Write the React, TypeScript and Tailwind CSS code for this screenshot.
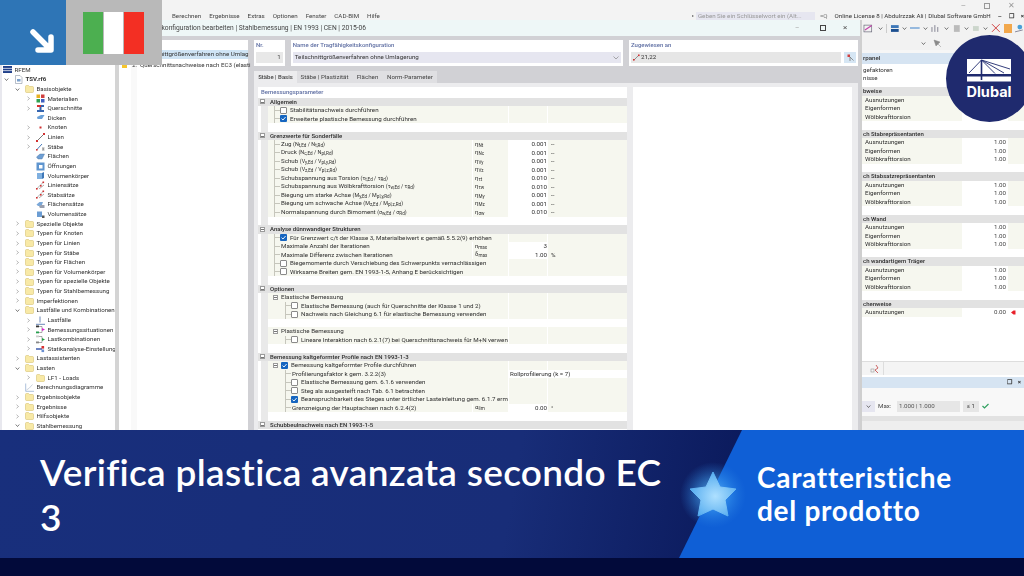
import React from 'react';

type RowT =
  | { k: 'h'; l: string }
  | { k: 's'; l: string; check?: boolean }
  | { k: 'c'; l: string; lv: 0 | 1; on?: boolean }
  | { k: 'v'; l: React.ReactNode; lv?: 0 | 1; s?: React.ReactNode; v?: string; u?: string; wide?: string }
  | { k: 'b' };

const Sub = ({ c }: { c: string }) => <span className="text-[4.6px] relative top-[1px]">{c}</span>;
const Ratio = ({ t, a, b, c, d }: { t: string; a: string; b: string; c: string; d: string }) => (
  <>
    {t} <span className="text-[5.4px]">({a}<Sub c={b} /> / {c}<Sub c={d} />)</span>
  </>
);
const Eta = ({ c }: { c: string }) => <>η<Sub c={c} /></>;

const rows: RowT[] = [
  { k: 'h', l: 'Allgemein' },
  { k: 'c', lv: 0, l: 'Stabilitätsnachweis durchführen' },
  { k: 'c', lv: 0, on: true, l: 'Erweiterte plastische Bemessung durchführen' },
  { k: 'b' },
  { k: 'h', l: 'Grenzwerte für Sonderfälle' },
  { k: 'v', l: <Ratio t="Zug" a="N" b="t,Ed" c="N" d="t,Rd" />, s: <Eta c="Nt" />, v: '0.001', u: '--' },
  { k: 'v', l: <Ratio t="Druck" a="N" b="c,Ed" c="N" d="pl,Rd" />, s: <Eta c="Nc" />, v: '0.001', u: '--' },
  { k: 'v', l: <Ratio t="Schub" a="V" b="y,Ed" c="V" d="pl,y,Rd" />, s: <Eta c="Vy" />, v: '0.001', u: '--' },
  { k: 'v', l: <Ratio t="Schub" a="V" b="z,Ed" c="V" d="pl,z,Rd" />, s: <Eta c="Vz" />, v: '0.001', u: '--' },
  { k: 'v', l: <Ratio t="Schubspannung aus Torsion" a="τ" b="t,Ed" c="τ" d="Rd" />, s: <Eta c="τt" />, v: '0.010', u: '--' },
  { k: 'v', l: <Ratio t="Schubspannung aus Wölbkrafttorsion" a="τ" b="w,Ed" c="τ" d="Rd" />, s: <Eta c="τw" />, v: '0.010', u: '--' },
  { k: 'v', l: <Ratio t="Biegung um starke Achse" a="M" b="y,Ed" c="M" d="pl,y,Rd" />, s: <Eta c="My" />, v: '0.001', u: '--' },
  { k: 'v', l: <Ratio t="Biegung um schwache Achse" a="M" b="z,Ed" c="M" d="pl,z,Rd" />, s: <Eta c="Mz" />, v: '0.001', u: '--' },
  { k: 'v', l: <Ratio t="Normalspannung durch Bimoment" a="σ" b="w,Ed" c="σ" d="Rd" />, s: <Eta c="σw" />, v: '0.010', u: '--' },
  { k: 'b' },
  { k: 'h', l: 'Analyse dünnwandiger Strukturen' },
  { k: 'c', lv: 0, on: true, l: 'Für Grenzwert c/t der Klasse 3, Materialbeiwert ε gemäß 5.5.2(9) erhöhen' },
  { k: 'v', l: 'Maximale Anzahl der Iterationen', s: <>n<Sub c="max" /></>, v: '3' },
  { k: 'v', l: 'Maximale Differenz zwischen Iterationen', s: <>δ<Sub c="max" /></>, v: '1.00', u: '%' },
  { k: 'c', lv: 0, l: 'Biegemomente durch Verschiebung des Schwerpunkts vernachlässigen' },
  { k: 'c', lv: 0, l: 'Wirksame Breiten gem. EN 1993-1-5, Anhang E berücksichtigen' },
  { k: 'b' },
  { k: 'h', l: 'Optionen' },
  { k: 's', l: 'Elastische Bemessung' },
  { k: 'c', lv: 1, l: 'Elastische Bemessung (auch für Querschnitte der Klasse 1 und 2)' },
  { k: 'c', lv: 1, l: 'Nachweis nach Gleichung 6.1 für elastische Bemessung verwenden' },
  { k: 'b' },
  { k: 's', l: 'Plastische Bemessung' },
  { k: 'c', lv: 1, l: 'Lineare Interaktion nach 6.2.1(7) bei Querschnittsnachweis für M+N verwen' },
  { k: 'b' },
  { k: 'h', l: 'Bemessung kaltgeformter Profile nach EN 1993-1-3' },
  { k: 's', check: true, l: 'Bemessung kaltgeformter Profile durchführen' },
  { k: 'v', lv: 1, l: 'Profilierungsfaktor k gem. 3.2.2(3)', wide: 'Rollprofilierung (k = 7)' },
  { k: 'c', lv: 1, l: 'Elastische Bemessung gem. 6.1.6 verwenden' },
  { k: 'c', lv: 1, l: 'Steg als ausgesteift nach Tab. 6.1 betrachten' },
  { k: 'c', lv: 1, on: true, l: 'Beanspruchbarkeit des Steges unter örtlicher Lasteinleitung gem. 6.1.7 ermi' },
  { k: 'v', lv: 1, l: 'Grenzneigung der Hauptachsen nach 6.2.4(2)', s: <>α<Sub c="lim" /></>, v: '0.00', u: '°' },
  { k: 'b' },
  { k: 'h', l: 'Schubbeulnachweis nach EN 1993-1-5' },
];

const Box = ({ on }: { on?: boolean }) =>
  on ? (
    <svg width="7" height="7" viewBox="0 0 7 7" className="shrink-0">
      <rect width="7" height="7" rx="1" fill="#1565c0" />
      <path d="M1.5 3.6 L3 5 L5.6 2" fill="none" stroke="#fff" strokeWidth="0.9" />
    </svg>
  ) : (
    <span className="block w-[7px] h-[7px] shrink-0 bg-white border border-[#8a8a8a] rounded-[1px]" />
  );

const Minus = () => (
  <span className="flex items-center justify-center w-[5px] h-[5px] shrink-0 border border-[#9a9a9a] bg-white">
    <span className="block w-[3px] h-[0.5px] bg-[#777]" />
  </span>
);

const Line = ({ ml }: { ml: string }) => (
  <span className={`flex items-center h-full w-[6px] shrink-0 border-l border-[#c6c6bc] ${ml}`}>
    <span className="block w-full h-px bg-[#c6c6bc]" />
  </span>
);

function ParamRow({ r }: { r: RowT }) {
  if (r.k === 'h')
    return (
      <div className="flex items-center h-[8.5px] bg-[#e2e2e2] pl-[2px] gap-[5px] text-[#2c2c2c] text-[6px] font-medium whitespace-nowrap">
        <Minus />
        {r.l}
      </div>
    );
  if (r.k === 'b')
    return (
      <div className="flex h-[8.5px]">
        <div className="w-[10px] bg-[#e9e9e9] border-l-[3px] border-white" />
        <div className="flex-1 bg-white" />
      </div>
    );
  const label =
    r.k === 's' ? (
      <>
        <span className="ml-[5px]">
          <Minus />
        </span>
        {r.check && <span className="ml-[3px]"><Box on /></span>}
        <span className="ml-[3px]">{r.l}</span>
      </>
    ) : r.k === 'c' ? (
      <>
        <Line ml={r.lv ? 'ml-[17px]' : 'ml-[6px]'} />
        <Box on={r.on} />
        <span className="ml-[3px]">{r.l}</span>
      </>
    ) : (
      <>
        <Line ml={r.lv ? 'ml-[17px]' : 'ml-[6px]'} />
        <span className="ml-[1px]">{r.l}</span>
      </>
    );
  const isV = r.k === 'v';
  const wide = isV ? r.wide : undefined;
  const hasSym = isV && !wide;
  return (
    <div className="flex h-[8.5px] text-[#2e2e2e] whitespace-nowrap bg-[#f6f7ef]">
      <div className="w-[10px] bg-[#e9e9e9] border-l-[3px] border-white shrink-0" />
      <div className={`flex items-center overflow-hidden shrink-0 ${hasSym ? 'w-[204px]' : 'w-[240px]'}`}>
        {label}
      </div>
      {hasSym && (
        <>
          <div className="w-[36px] shrink-0 flex items-center pl-[2px] border-l border-white text-[6px]"><span>{isV && r.s}</span></div>
          <div className="w-[40px] shrink-0 flex items-center justify-end pr-[1px] bg-white">{isV && r.v}</div>
        </>
      )}
      {wide ? (
        <div className="flex-1 flex items-center pl-[2px] bg-white">{wide}</div>
      ) : (
        <>
          {!hasSym && <div className="w-[40px] shrink-0 border-x border-white" />}
          <div className="flex-1 flex items-center pl-[3px]">{isV && r.u}</div>
        </>
      )}
    </div>
  );
}

const Folder = () => (
  <svg width="9" height="8" viewBox="0 0 9 8" className="shrink-0">
    <path d="M0.5 1.5 Q0.5 0.5 1.5 0.5 H3.5 L4.5 1.5 H7.5 Q8.5 1.5 8.5 2.5 V6.5 Q8.5 7.5 7.5 7.5 H1.5 Q0.5 7.5 0.5 6.5Z" fill="#f8e9a6" stroke="#d8c272" strokeWidth="0.6" />
  </svg>
);

function TIcon({ k }: { k: string }) {
  const p = { width: 9, height: 9, viewBox: '0 0 9 9', className: 'shrink-0' } as const;
  switch (k) {
    case 'mat':
      return <svg {...p}><rect x="0.5" y="0.5" width="3.5" height="3.5" fill="#e8b020" /><rect x="5" y="0.5" width="3.5" height="3.5" fill="#d04040" /><rect x="0.5" y="5" width="3.5" height="3.5" fill="#30a050" /><rect x="5" y="5" width="3.5" height="3.5" fill="#4060c0" /></svg>;
    case 'qs':
      return <svg {...p}><path d="M1 1H8V3H5.5V6H8V8H1V6H3.5V3H1Z" fill="#3565b0" /><path d="M1 1H5V3H1Z" fill="#d83030" /></svg>;
    case 'thick':
      return <svg {...p}><path d="M1 4L5 2H8.5L6 6H1.5Z" fill="#6aa0d8" /></svg>;
    case 'node':
      return <svg {...p}><rect x="3.5" y="3.5" width="2" height="2" fill="#d03030" /></svg>;
    case 'line':
      return <svg {...p}><path d="M1 8L8 1" stroke="#555" strokeWidth="0.8" /><rect x="0" y="7" width="2" height="2" fill="#d03030" /><rect x="7" y="0" width="2" height="2" fill="#d03030" /></svg>;
    case 'bar':
      return <svg {...p}><path d="M0.5 8L6 2" stroke="#4a7ab8" strokeWidth="1" /><rect x="0" y="7" width="1.6" height="1.6" fill="#d03030" /><path d="M6 6H8.5M6 8H8.5M7.2 6V8" stroke="#555" strokeWidth="0.6" /></svg>;
    case 'surf':
      return <svg {...p}><path d="M0.5 5L4 2H8.5L6 7H2Z" fill="#6e9fd4" stroke="#47709f" strokeWidth="0.4" /></svg>;
    case 'open':
      return <svg {...p}><rect x="0.5" y="0.5" width="8" height="8" fill="#5f95cf" /><rect x="3" y="3" width="3.5" height="3.5" fill="#fff" /></svg>;
    case 'solid':
      return <svg {...p}><path d="M1 2H6V8H1Z" fill="#7fb0e0" /><path d="M6 2L8 1V7L6 8Z" fill="#3f78b8" /></svg>;
    case 'lset':
      return <svg {...p}><path d="M0.5 8L7.5 1M3 8L8 4" stroke="#777" strokeWidth="0.6" /><rect x="0" y="7" width="1.6" height="1.6" fill="#d03030" /><rect x="6.5" y="0.5" width="1.6" height="1.6" fill="#d03030" /><rect x="4" y="4" width="1.6" height="1.6" fill="#d03030" /></svg>;
    case 'sset':
      return <svg {...p}><path d="M0.5 4.5L3.5 2H7L5.5 6H2Z" fill="#7ba8d8" /><path d="M3 6.5L5 5H8.5V8H4Z" fill="#9a9fae" /></svg>;
    case 'vset':
      return <svg {...p}><rect x="1" y="1.5" width="5" height="5.5" fill="#6c9dd3" /><rect x="6" y="5.5" width="2.5" height="2.5" fill="#555" /></svg>;
    case 'lf':
      return <svg {...p}><path d="M4 0.5V6.5M0 8.3H9" stroke="#5b7bb0" strokeWidth="0.9" /></svg>;
    case 'bs':
      return <svg {...p}><path d="M1 1.5H6M1 7.5H6M6 1.5V7.5" stroke="#777" strokeWidth="0.6" /><rect x="0" y="0.5" width="3" height="1.8" fill="#333" /><rect x="0" y="6.5" width="3" height="1.8" fill="#28a050" /><path d="M6 3L9 4.5L6 6Z" fill="#e020d0" /></svg>;
    case 'lk':
      return <svg {...p}><path d="M1 1.5H6M1 7.5H6M6 1.5V7.5" stroke="#777" strokeWidth="0.6" /><rect x="0" y="0.5" width="3" height="1.8" fill="#ccc" /><rect x="0" y="6.5" width="3" height="1.8" fill="#888" /><path d="M6 3L9 4.5L6 6Z" fill="#20a040" /></svg>;
    case 'stat':
      return <svg {...p}><path d="M0 5H6" stroke="#2e50a8" strokeWidth="1.4" /><rect x="5.5" y="2" width="2.6" height="2.6" fill="#d83030" /><rect x="5.5" y="5.5" width="2.6" height="2.6" fill="#6a8fd0" /></svg>;
    case 'diag':
      return <svg {...p}><path d="M0.7 0.5V8.3H9" stroke="#8aa6cc" strokeWidth="0.7" fill="none" /><path d="M1.5 7Q4 6 7.5 1.5" stroke="#aab6c8" strokeWidth="0.6" fill="none" /></svg>;
    case 'rfem':
      return <svg {...p}><rect x="0" y="1" width="9" height="7" fill="#20408a" /><path d="M0 3.4H9M0 5.6H9" stroke="#fff" strokeWidth="0.7" /></svg>;
    case 'file':
      return <svg {...p}><path d="M1.5 0.5H6L8 2.5V8.5H1.5Z" fill="#fff" stroke="#8a94a4" strokeWidth="0.6" /><rect x="3" y="4" width="3.5" height="2.5" fill="#7aa0cc" /></svg>;
    default:
      return <Folder />;
  }
}

const Chev = ({ open }: { open?: boolean }) => (
  <svg width="5" height="5" viewBox="0 0 5 5" className="shrink-0">
    {open ? <path d="M0.7 1.5L2.5 3.5L4.3 1.5" fill="none" stroke="#444" strokeWidth="0.7" /> : <path d="M1.5 0.7L3.5 2.5L1.5 4.3" fill="none" stroke="#888" strokeWidth="0.6" />}
  </svg>
);

type T = [number, string, string, 'o' | 'c' | ''];
const tree: T[] = [
  [-1, 'RFEM', 'rfem', ''],
  [0, 'TSV.rf6', 'file', 'o'],
  [1, 'Basisobjekte', 'f', 'o'],
  [2, 'Materialien', 'mat', 'c'],
  [2, 'Querschnitte', 'qs', 'c'],
  [2, 'Dicken', 'thick', ''],
  [2, 'Knoten', 'node', 'c'],
  [2, 'Linien', 'line', 'c'],
  [2, 'Stäbe', 'bar', 'c'],
  [2, 'Flächen', 'surf', ''],
  [2, 'Öffnungen', 'open', ''],
  [2, 'Volumenkörper', 'solid', ''],
  [2, 'Liniensätze', 'lset', ''],
  [2, 'Stabsätze', 'lset', ''],
  [2, 'Flächensätze', 'sset', ''],
  [2, 'Volumensätze', 'vset', ''],
  [1, 'Spezielle Objekte', 'f', 'c'],
  [1, 'Typen für Knoten', 'f', 'c'],
  [1, 'Typen für Linien', 'f', 'c'],
  [1, 'Typen für Stäbe', 'f', 'c'],
  [1, 'Typen für Flächen', 'f', 'c'],
  [1, 'Typen für Volumenkörper', 'f', 'c'],
  [1, 'Typen für spezielle Objekte', 'f', 'c'],
  [1, 'Typen für Stahlbemessung', 'f', 'c'],
  [1, 'Imperfektionen', 'f', 'c'],
  [1, 'Lastfälle und Kombinationen', 'f', 'o'],
  [2, 'Lastfälle', 'lf', 'c'],
  [2, 'Bemessungssituationen', 'bs', 'c'],
  [2, 'Lastkombinationen', 'lk', 'c'],
  [2, 'Statikanalyse-Einstellung', 'stat', 'c'],
  [1, 'Lastassistenten', 'f', 'c'],
  [1, 'Lasten', 'f', 'o'],
  [2, 'LF1 - Loads', 'f', 'c'],
  [1, 'Berechnungsdiagramme', 'diag', ''],
  [1, 'Ergebnisobjekte', 'f', 'c'],
  [1, 'Ergebnisse', 'f', 'c'],
  [1, 'Hilfsobjekte', 'f', 'c'],
  [1, 'Stahlbemessung', 'f', 'o'],
];

function TreeRow({ t }: { t: T }) {
  const [lv, label, ic, st] = t;
  const pad = lv === -1 ? 'pl-[1px]' : lv === 0 ? 'pl-[2px]' : lv === 1 ? 'pl-[13px]' : 'pl-[24px]';
  return (
    <div className={`flex items-center h-[9.63px] whitespace-nowrap text-[#333] text-[6.15px] ${pad}`}>
      {lv >= 0 && (
        <span className="w-[5px] mr-[5px] shrink-0 flex">{st && <Chev open={st === 'o'} />}</span>
      )}
      <TIcon k={ic} />
      <span className={`ml-[2.5px] ${ic === 'file' ? 'font-bold' : ''}`}>{label}</span>
    </div>
  );
}

const RSub = ({ a, b }: { a: string; b: string }) => (
  <div className="flex h-[8.5px] bg-[#f6f7ef]">
    <div className="w-[100px] flex items-center pl-[3px] text-[#2e2e2e]">{a}</div>
    <div className="w-[46px] flex items-center justify-end pr-[2px] bg-white text-[#444]">{b}</div>
    <div className="flex-1" />
  </div>
);

const triple = ['Ausnutzungen|1.00', 'Eigenformen|1.00', 'Wölbkrafttorsion|1.00'];
const groups: [string, string[]][] = [
  ['bweise', ['Ausnutzungen|', 'Eigenformen|', 'Wölbkrafttorsion|']],
  ['ch Stabrepräsentanten', triple],
  ['ch Stabsatzrepräsentanten', triple],
  ['ch Wand', triple],
  ['ch wandartigem Träger', triple],
  ['chenweise', ['Ausnutzungen|0.00']],
];

export default function App() {
  return (
    <div className="relative w-[1024px] h-[576px] overflow-hidden bg-[#020a3a] flex flex-col [font-family:Roboto,sans-serif]">
      {/* application screenshot */}
      <div className="h-[430px] shrink-0 flex flex-col overflow-hidden text-[6.2px] leading-none blur-[0.3px] bg-[#f0f0f0]">
        {/* window chrome */}
        <div className="h-[20px] shrink-0 flex flex-col bg-[#f3f3f3]">
          <div className="h-[12px] flex items-center justify-end gap-[18px] pr-[9px] text-[#999] text-[8px]">
            <span>–</span>
            <span className="block w-[6px] h-[6px] border border-[#999]" />
            <span>✕</span>
          </div>
          <div className="h-[8px] flex items-center text-[#444]">
            <div className="pl-[172px] flex gap-[8px] w-[692px] shrink-0">
              <span>Berechnen</span>
              <span>Ergebnisse</span>
              <span>Extras</span>
              <span>Optionen</span>
              <span>Fenster</span>
              <span>CAD-BIM</span>
              <span>Hilfe</span>
            </div>
            <span className="text-[#666] text-[4px] w-[4px]">▸</span>
            <div className="w-[122px] h-[8px] flex items-center pl-[2px] bg-[#e6e6f0] text-[#999]">Geben Sie ein Schlüsselwort ein (Alt...</div>
            <span className="ml-[5px] w-[15px] text-[#777]">=Q</span>
            <span className="text-[#333] whitespace-nowrap">Online License 8 | Abdulrzzak Ali | Dlubal Software GmbH</span>
            <span className="ml-[7px] flex gap-[7px] text-[#333] font-bold">
              <span>–</span><span>❐</span><span>×</span>
            </span>
          </div>
        </div>
        <div className="flex-1 min-h-0 flex">
          {/* navigator */}
          <div className="w-[115px] shrink-0 bg-white border-l-2 border-[#e8e8ee] pt-[45px] overflow-hidden">
            {tree.map((t) => (
              <TreeRow key={t[1] + t[0]} t={t} />
            ))}
          </div>
          <div className="w-[4px] shrink-0 bg-[#d4d4d4]" />
          {/* dialog */}
          <div className="w-[741px] shrink-0 flex flex-col bg-[#d1d1d5]">
            <div className="h-[16px] shrink-0 flex items-center bg-[#eef7f7] text-[#444] text-[6.7px] whitespace-nowrap">
              <span className="w-[676px]">Tragfähigkeitskonfiguration bearbeiten | Stahlbemessung | EN 1993 | CEN | 2015-06</span>
              <span className="w-[25px] text-[#aaa]">–</span>
              <span className="block w-[6px] h-[6px] border border-[#444]" />
              <span className="ml-[17px] text-[8px] text-[#555]">×</span>
            </div>
            <div className="flex-1 min-h-0 flex pt-[4px]">
              {/* list */}
              <div className="w-[129px] shrink-0 mb-[-10px] flex flex-col whitespace-nowrap bg-[linear-gradient(90deg,#fff_12px,#f9f9f9_12px,#f9f9f9_18px,#fff_18px)]">
                <div className="h-[10px]" />
                <div className="h-[9px] shrink-0 bg-[#cfe4f5] pl-[3px] flex items-center gap-[3px] text-[#333]">
                  <span className="block w-[5px] h-[5px] shrink-0 bg-[#f6c52b]" />
                  <span className="ml-[2px]">1.</span> Teilschnittgrößenverfahren ohne Umlag
                </div>
                <div className="h-[2px]" />
                <div className="h-[9px] shrink-0 pl-[3px] flex items-center gap-[3px] text-[#333]">
                  <span className="block w-[5px] h-[5px] shrink-0 bg-[#f6c52b]" />
                  <span className="ml-[2px]">2.</span> Querschnittsnachweise nach EC3 (elasti
                </div>
              </div>
              {/* right of list */}
              <div className="w-[604px] shrink-0 ml-[6px] flex flex-col min-h-0">
                <div className="h-[26px] shrink-0 flex gap-[6px]">
                  <div className="w-[31px] bg-white pt-[2px] px-[2px] flex flex-col">
                    <span className="h-[8px] text-[#5f6fa3] text-[6px] font-medium">Nr.</span>
                    <span className="mt-[2px] h-[11px] bg-[#e8e8e8] flex items-center justify-end pr-[2px] text-[#444]">1</span>
                  </div>
                  <div className="w-[336px] bg-white pt-[2px] px-[2px] flex flex-col">
                    <span className="h-[8px] text-[#5f6fa3] text-[6px] font-medium">Name der Tragfähigkeitskonfiguration</span>
                    <span className="mt-[2px] h-[11px] bg-[#e6e6f0] flex items-center justify-between px-[2px] text-[#333]">
                      Teilschnittgrößenverfahren ohne Umlagerung
                      <svg width="6" height="4" viewBox="0 0 6 4"><path d="M0.5 0.5L3 3L5.5 0.5" fill="none" stroke="#777" strokeWidth="0.6" /></svg>
                    </span>
                  </div>
                  <div className="flex-1 bg-white pt-[2px] px-[2px] flex flex-col">
                    <span className="h-[8px] text-[#5f6fa3] text-[6px] font-medium">Zugewiesen an</span>
                    <span className="mt-[2px] h-[11px] flex gap-[3px]">
                      <span className="w-[210px] bg-[#e6e6e6] flex items-center pl-[2px] gap-[1px] text-[#333]">
                        <svg width="7" height="7" viewBox="0 0 7 7"><path d="M1 6L6 1" stroke="#555" strokeWidth="0.6" /><rect x="0" y="5" width="1.6" height="1.6" fill="#d03030" /><rect x="5" y="0.5" width="1.6" height="1.6" fill="#d03030" /></svg>
                        21,22
                      </span>
                      <span className="w-[12px] bg-[#d6e6f4] flex items-center justify-center">
                        <svg width="7" height="8" viewBox="0 0 7 8"><rect x="0.5" y="0.5" width="2.5" height="2.5" fill="#d04040" /><path d="M3 3L6.5 6.5M3 3V7" stroke="#777" strokeWidth="0.8" /></svg>
                      </span>
                    </span>
                  </div>
                </div>
                {/* tabs */}
                <div className="mt-[5px] h-[12px] shrink-0 flex text-[#444] whitespace-nowrap">
                  <span className="w-[43px] flex items-center justify-center bg-[#ececee] font-medium text-[6px]">Stäbe | Basis</span>
                  <span className="w-[55px] flex items-center justify-center bg-[#dfdfe2]">Stäbe | Plastizität</span>
                  <span className="w-[31px] flex items-center justify-center bg-[#dfdfe2]">Flächen</span>
                  <span className="w-[54px] flex items-center justify-center bg-[#dfdfe2]">Norm-Parameter</span>
                </div>
                {/* page */}
                <div className="flex-1 min-h-0 bg-[#ececee] pt-[4px] pl-[4px] pr-[6px] flex gap-[6px]">
                  <div className="w-[369px] shrink-0 bg-white flex flex-col overflow-hidden">
                    <div className="h-[10.5px] shrink-0 flex items-center pl-[3px] text-[#5f6fa3] text-[6px] font-medium">Bemessungsparameter</div>
                    {rows.map((r, i) => (
                      <ParamRow key={i} r={r} />
                    ))}
                  </div>
                  <div className="flex-1 bg-white" />
                </div>
              </div>
            </div>
          </div>
          {/* right panel */}
          <div className="flex-1 min-w-0 flex flex-col bg-white border-l-[2px] border-[#cfcfcf] whitespace-nowrap">
            <div className="h-[16px] shrink-0 bg-[#f2f2f2] flex items-center gap-[3px] pl-[1px]">
              <svg width="12" height="9" viewBox="0 0 12 9"><rect x="1" y="1" width="8" height="7" fill="none" stroke="#667" strokeWidth="0.7" /><path d="M2 6L9 1.5" stroke="#c23fa8" strokeWidth="1.2" /></svg>
              <Chev open />
              <span className="block w-px h-[9px] bg-[#ccc]" />
              <svg width="10" height="9" viewBox="0 0 10 9"><rect x="1" y="1" width="8" height="3" fill="#3f78b8" /><rect x="1" y="5" width="8" height="3" fill="#1c4f90" /></svg>
              <Chev open />
              <svg width="10" height="4" viewBox="0 0 10 4"><path d="M0 2H10" stroke="#6a9ed4" strokeWidth="1.4" /></svg>
              <Chev open />
              <svg width="10" height="9" viewBox="0 0 10 9"><path d="M1 8V3M4 8V1M7 8V3" stroke="#778" strokeWidth="0.9" /></svg>
              <Chev open />
              <svg width="10" height="9" viewBox="0 0 10 9"><rect x="2" y="1" width="6" height="7" fill="#bbb" /></svg>
              <Chev open />
              <svg width="8" height="9" viewBox="0 0 8 9"><rect x="1" y="2" width="6" height="5" fill="#ccd6cc" /></svg>
              <Chev open />
              <svg width="10" height="10" viewBox="0 0 10 10"><path d="M1 1L9 9M9 1L1 9" stroke="#d04040" strokeWidth="1" /></svg>
              <span className="block w-[9px] h-[9px] bg-[#f2a84c]" />
              <svg width="9" height="9" viewBox="0 0 9 9"><circle cx="5" cy="3" r="2.5" fill="#4aa0d8" /><path d="M0 8L8 6" stroke="#889" strokeWidth="1" /></svg>
            </div>
            <div className="h-[14px] shrink-0 bg-[#f2f2f2] flex items-center pl-[59px] gap-[7px]">
              <Chev open />
              <svg width="9" height="8" viewBox="0 0 9 8"><path d="M1 1L7 3L3 7ZM4 4L8 8" fill="#8a8a8a" stroke="#8a8a8a" strokeWidth="0.5" /></svg>
            </div>
            <div className="h-[3px] shrink-0 bg-[#f6f6f6]" />
            <div className="h-[11px] shrink-0 bg-[#d6e4f2] flex items-center pl-px font-medium text-[#333]">rpanel</div>
            <div className="pt-[3px] pb-[5px] pl-px h-[23px] shrink-0 text-[#333]">
              <div className="h-[7.5px]">gefaktoren</div>
              <div className="h-[7.5px]">nisse</div>
            </div>
            {groups.map(([h, rs], gi) => (
              <div key={h} className={gi === groups.length - 1 ? '' : 'pb-[8.5px]'}>
                <div className="h-[8.5px] bg-[#e2e2e2] flex items-center pl-px text-[#2c2c2c] text-[6px] font-medium">{h}</div>
                {rs.map((r) => {
                  const [a, b] = r.split('|');
                  return b === '0.00' ? (
                    <div key={a} className="flex h-[8.5px] bg-[#f6f7ef]">
                      <div className="w-[100px] flex items-center pl-[3px] text-[#2e2e2e]">{a}</div>
                      <div className="w-[46px] flex items-center justify-end pr-[2px] bg-white text-[#444]">{b}</div>
                      <div className="flex-1 flex items-center pl-[3px] bg-white">
                        <svg width="5" height="5" viewBox="0 0 5 5"><path d="M0 2.5L2.5 0.5H4.5V4.5H2.5Z" fill="#e8202a" /></svg>
                      </div>
                    </div>
                  ) : (
                    <RSub key={a} a={a} b={b} />
                  );
                })}
              </div>
            ))}
            <div className="flex-1 min-h-0 bg-white" />
            <div className="h-[14px] shrink-0 bg-[#f4f4f4] border-t border-[#ddd] flex items-center">
              <span className="w-[18px] h-full ml-[4px] border-r border-[#ddd] flex items-center justify-center">
                <svg width="10" height="10" viewBox="0 0 10 10"><rect x="1" y="5" width="3" height="3" fill="none" stroke="#999" strokeWidth="0.6" /><path d="M6 1L8 4L5 6L8 9" fill="none" stroke="#c24040" strokeWidth="0.8" /></svg>
              </span>
            </div>
            <div className="h-[2px] shrink-0" />
            <div className="h-[11px] shrink-0 bg-[#d6e4f2] flex items-center justify-end gap-[6px] pr-[3px] text-[#333] font-bold">
              <span>❐</span><span>×</span>
            </div>
            <div className="h-[12px] shrink-0 bg-[#f8f8f8]" />
            <div className="h-[12px] shrink-0 bg-[#f8f8f8] flex items-center">
              <span className="w-[13px] h-[11px] bg-[#e6e6f0] flex items-center justify-center"><Chev open /></span>
              <span className="ml-[3px] w-[19px] text-[#444]">Max:</span>
              <span className="w-[63px] h-[11px] bg-[#e6e6e6] flex items-center pl-[2px] text-[#555]">1.000 | 1.000</span>
              <span className="ml-[3px] w-[16px] h-[11px] bg-[#e6e6e6] flex items-center justify-center text-[#444]">≤ 1</span>
              <svg className="ml-[3px]" width="7" height="6" viewBox="0 0 7 6"><path d="M0.5 3L2.5 5L6.5 1" fill="none" stroke="#30a060" strokeWidth="1.2" /></svg>
            </div>
            <div className="h-[4px] shrink-0 bg-[#f8f8f8]" />
            <div className="h-[5px] shrink-0 bg-[#e2e2e2]" />
            <div className="h-[9px] shrink-0 bg-[#eeeeee]" />
          </div>
        </div>
      </div>

      {/* banner */}
      <div className="relative h-[128px] shrink-0 flex items-center bg-[linear-gradient(100deg,#182f7c_0%,#182d78_50%,#0b1a5c_72%)]">
        <div className="absolute inset-0 bg-[#0f5fd6] [clip-path:polygon(742px_0,100%_0,100%_100%,679px_100%)]" />
        <h1 className="relative pl-[40px] pr-[20px] w-[689px] shrink-0 text-white text-[37px] leading-[45px] font-semibold tracking-[0.3px] [font-family:Lato,sans-serif]">
          Verifica plastica avanzata secondo EC 3
        </h1>
        <svg className="relative shrink-0 overflow-visible" width="48" height="46" viewBox="0 0 48 46">
          <defs>
            <radialGradient id="glow">
              <stop offset="0%" stopColor="#6cc4ff" stopOpacity="0.9" />
              <stop offset="55%" stopColor="#3c9cf0" stopOpacity="0.45" />
              <stop offset="100%" stopColor="#2a80e0" stopOpacity="0" />
            </radialGradient>
            <radialGradient id="starFill" cx="55%" cy="55%" r="60%">
              <stop offset="0%" stopColor="#aee0ff" />
              <stop offset="100%" stopColor="#4fa8ee" />
            </radialGradient>
          </defs>
          <circle cx="24" cy="24" r="33" fill="url(#glow)" />
          <path d="M24 1 L31 16 L47 18 L36 29 L39 45 L24 38 L9 45 L12 29 L1 18 L17 16 Z" fill="url(#starFill)" stroke="url(#starFill)" strokeWidth="1" strokeLinejoin="round" />
        </svg>
        <p className="relative ml-[20px] text-white text-[28px] leading-[33px] font-bold tracking-[0.7px] [font-family:Lato,sans-serif]">
          Caratteristiche
          <br />
          del prodotto
        </p>
      </div>
      <div className="h-[18px] shrink-0 bg-[#020a3a]" />

      {/* top-left badge */}
      <div className="absolute left-0 top-0 flex h-[65px]">
        <div className="w-[66px] bg-[#2e75b6] flex items-end justify-end pb-[11px] pr-[11px]">
          <svg width="26" height="26" viewBox="0 0 26 26">
            <path d="M4 4L21 21M22 9V22H9" fill="none" stroke="#fff" strokeWidth="5.5" strokeLinecap="round" strokeLinejoin="round" />
          </svg>
        </div>
        <div className="w-[96px] bg-[#b9b9b9] pl-[17px] pt-[12px]">
          <div className="flex w-[61px] h-[42px] gap-px">
            <span className="flex-1 bg-[#4caf50]" />
            <span className="flex-1 bg-white" />
            <span className="flex-1 bg-[#f32f23]" />
          </div>
        </div>
      </div>

      {/* Dlubal logo */}
      <div className="absolute left-[946px] top-[35px] w-[87px] h-[87px] rounded-full bg-[#1f2a6e] flex flex-col items-center pt-[24px] pr-[1px]">
        <svg width="44" height="23" viewBox="0 0 44 23">
          <rect width="44" height="15" fill="#fff" />
          <rect y="17.5" width="44" height="5" fill="#fff" />
          <path d="M14.5 1V21" stroke="#1f2a6e" strokeWidth="1.6" />
          <path d="M14.5 1L2 14M14.5 1L28 14.5M14.5 1L37 14M14.5 1L43 10" stroke="#1f2a6e" strokeWidth="0.9" fill="none" />
        </svg>
        <span className="mt-[1px] text-white text-[14.5px] leading-[18px] font-bold [font-family:Inter,sans-serif]">Dlubal</span>
      </div>
    </div>
  );
}
